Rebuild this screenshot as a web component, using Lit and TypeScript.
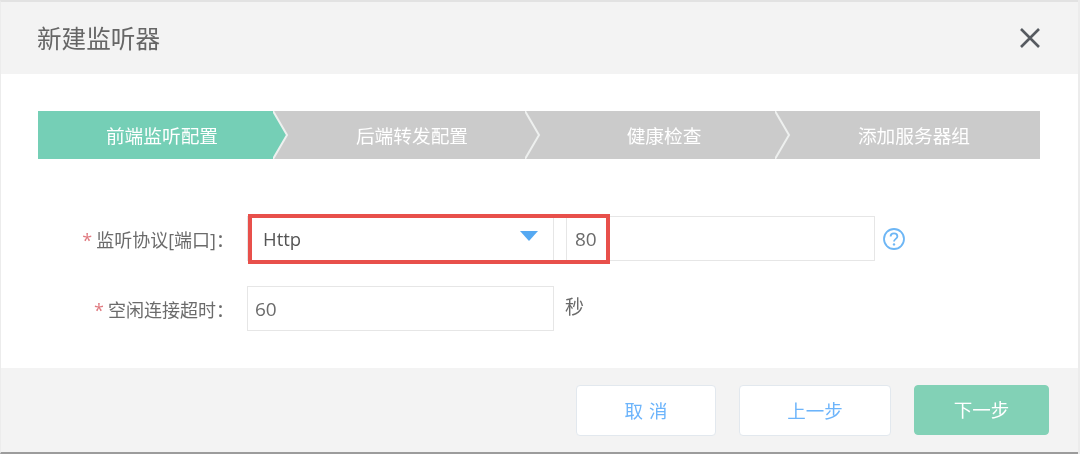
import { LitElement, html, css, svg } from "lit";
import { customElement } from "lit/decorators.js";

const steps = [
  { label: "前端监听配置", active: true },
  { label: "后端转发配置", active: false },
  { label: "健康检查", active: false },
  { label: "添加服务器组", active: false },
];

@customElement("app-root")
export class AppRoot extends LitElement {
  static styles = css`
    :host {
      display: block;
      width: 1080px;
      height: 454px;
      overflow: hidden;
      font-family: "Open Sans", "Noto Sans CJK SC", sans-serif;
      background: #ececec;
    }
    .dialog {
      width: 1078px;
      height: 454px;
      box-sizing: border-box;
      display: flex;
      flex-direction: column;
      border-top: 2px solid #e2e2e2;
      border-bottom: 2px solid #9c9c9c;
      border-left: 1px solid #ececec;
      background: #fff;
      filter: blur(0.5px);
    }
    .head {
      height: 72px;
      flex: none;
      box-sizing: border-box;
      background: #f3f3f3;
      display: flex;
      align-items: center;
      justify-content: space-between;
      padding: 0 37px 0 36px;
    }
    .title {
      font-size: 24.6px;
      color: #666;
      margin-top: -3px;
    }
    .close {
      width: 22px;
      height: 22px;
      display: block;
      margin-top: -1px;
    }
    .body {
      flex: 1;
      padding: 37px 37px 0 37px;
      background: #fff;
    }
    .steps {
      display: grid;
      grid-template-columns: 236px 252px 250px 264px;
      width: 1002px;
      height: 48px;
      background: #cbcbcb;
    }
    .step {
      position: relative;
      display: flex;
      align-items: center;
      justify-content: center;
      color: #fff;
      font-size: 18.7px;
      height: 46px;
      padding-bottom: 2px;
    }
    .step.active {
      background: #75cfb6;
    }
    .step:nth-child(1) { padding-left: 12px; }
    .step:nth-child(2) { padding-left: 24px; }
    .step:nth-child(3) { padding-left: 26px; }
    .step:nth-child(4) { padding-left: 12px; }
    .chev {
      position: absolute;
      top: 0;
      right: -15px;
      width: 16px;
      height: 48px;
      z-index: 1;
    }
    .form {
      margin-top: 57px;
      display: flex;
      flex-direction: column;
      gap: 25px;
    }
    .row {
      position: relative;
      display: flex;
      align-items: center;
      gap: 12px;
    }
    .label {
      width: 196px;
      margin-right: 1px;
      text-align: right;
      font-size: 18px;
      color: #6b6b6b;
      white-space: nowrap;
    }
    .req {
      color: #e07a80;
      margin-right: 4px;
    }
    .field {
      height: 45px;
      width: 307px;
      box-sizing: border-box;
      border: 1px solid #e6e6e6;
      display: flex;
      align-items: center;
      justify-content: space-between;
      padding: 0 15px 0 7px;
      font-size: 19px;
      color: #6b6b6b;
      background: #fff;
    }
    .select {
      color: #555;
      padding-left: 15px;
      font-size: 18.5px;
    }
    .port {
      width: 309px;
      padding-left: 8px;
    }
    .caret {
      width: 0;
      height: 0;
      border-left: 9.5px solid transparent;
      border-right: 9.5px solid transparent;
      border-top: 10px solid #55a9f2;
      margin-bottom: 6px;
    }
    .help {
      width: 24px;
      height: 24px;
      margin-left: -5px;
      display: block;
    }
    .unit {
      font-size: 19px;
      color: #6b6b6b;
      margin-top: -6px;
      margin-left: -1px;
    }
    .mark {
      position: absolute;
      left: 210px;
      top: -2px;
      width: 362px;
      height: 50px;
      box-sizing: border-box;
      border: 4px solid #e8504b;
      pointer-events: none;
    }
    .foot {
      flex: none;
      height: 84px;
      background: #f3f3f3;
      display: flex;
      align-items: flex-start;
      justify-content: flex-end;
      gap: 23px;
      padding: 17px 29px 0 0;
      box-sizing: border-box;
    }
    .btn {
      height: 51px;
      box-sizing: border-box;
      border: 1px solid #e2e8ee;
      border-radius: 4px;
      background: #fff;
      color: #6cb4fb;
      font: inherit;
      font-size: 18.5px;
      padding: 0 0 2px;
    }
    .cancel { width: 140px; letter-spacing: 6px; padding-left: 6px; }
    .prev { width: 152px; }
    .next {
      width: 135px;
      height: 50px;
      background: #82d1b6;
      border-color: #82d1b6;
      color: #fff;
    }
  `;

  render() {
    return html`
      <div class="dialog">
        <div class="head">
          <div class="title">新建监听器</div>
          <svg class="close" viewBox="0 0 22 22" fill="none" stroke="#565a60" stroke-width="2.6">
            <path d="M2 2 L20 20 M20 2 L2 20"></path>
          </svg>
        </div>
        <div class="body">
          <div class="steps">
            ${steps.map(
              (s, i) => html`
                <div class="step ${s.active ? "active" : ""}">
                  ${s.label}
                  ${i < 3
                    ? html`<svg class="chev" viewBox="0 0 16 48">
                        ${svg`<path d="M0 0 L14 24 L0 48 Z" fill="${s.active ? "#75cfb6" : "#cbcbcb"}"></path>
                        <path d="M0 0 L14 24 L0 48" fill="none" stroke="#eef0ef" stroke-width="2"></path>`}
                      </svg>`
                    : ""}
                </div>
              `
            )}
          </div>
          <div class="form">
            <div class="row">
              <div class="label"><span class="req">*</span>监听协议[端口]：</div>
              <div class="field select">Http<span class="caret"></span></div>
              <div class="field port">80</div>
              <svg class="help" viewBox="0 0 24 24" fill="none">
                <circle cx="12" cy="12" r="10" stroke="#6db6f5" stroke-width="1.8"></circle>
                <path d="M8.6 9.6 C8.6 7.5 10.2 6.4 12 6.4 C14 6.4 15.4 7.7 15.4 9.4 C15.4 11.8 12 12 12 14.6" stroke="#6db6f5" stroke-width="1.8"></path>
                <circle cx="12" cy="17.4" r="1.2" fill="#6db6f5"></circle>
              </svg>
              <div class="mark"></div>
            </div>
            <div class="row">
              <div class="label"><span class="req">*</span>空闲连接超时：</div>
              <div class="field">60</div>
              <div class="unit">秒</div>
            </div>
          </div>
        </div>
        <div class="foot">
          <button class="btn cancel">取消</button>
          <button class="btn prev">上一步</button>
          <button class="btn next">下一步</button>
        </div>
      </div>
    `;
  }
}
